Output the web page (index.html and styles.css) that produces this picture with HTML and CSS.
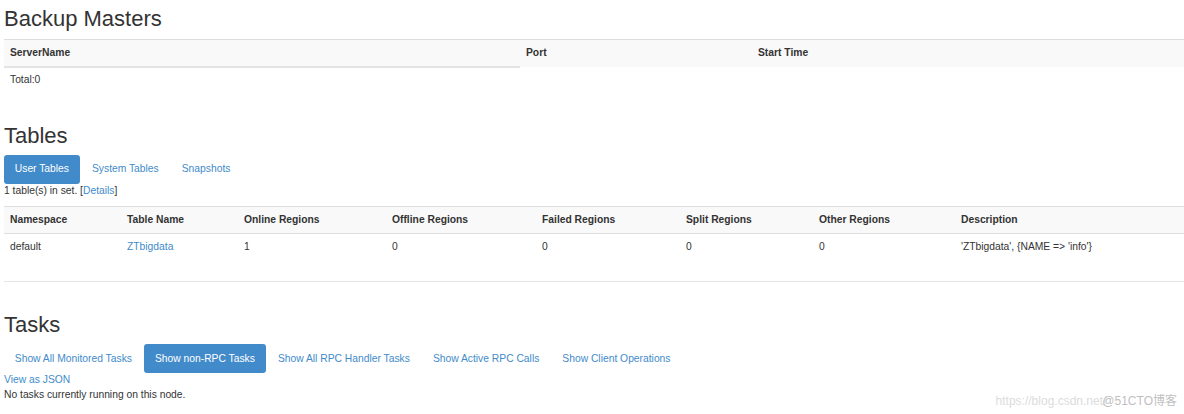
FILE: index.html
```html
<!DOCTYPE html>
<html>
<head>
<meta charset="utf-8">
<title>HBase Master</title>
<link rel="stylesheet" href="styles.css">
</head>
<body>
<section class="sec sec-backup">
  <h2 class="title">Backup Masters</h2>
  <table class="tbl">
    <colgroup>
      <col class="bw1"><col class="bw2"><col>
    </colgroup>
    <tr class="head"><th>ServerName</th><th>Port</th><th>Start Time</th></tr>
    <tr><td class="total">Total:0</td></tr>
  </table>
</section>

<section class="sec sec-tables">
  <h2 class="title">Tables</h2>
  <ul class="pills">
    <li><a class="pill active">User Tables</a></li>
    <li><a class="pill">System Tables</a></li>
    <li><a class="pill">Snapshots</a></li>
  </ul>
  <p class="count">1 table(s) in set. [<a class="link">Details</a>]</p>
  <table class="tbl">
    <colgroup>
      <col class="tw1"><col class="tw2"><col class="tw3"><col class="tw4"><col class="tw5"><col class="tw6"><col class="tw7"><col>
    </colgroup>
    <tr class="head">
      <th>Namespace</th><th>Table Name</th><th>Online Regions</th><th>Offline Regions</th><th>Failed Regions</th><th>Split Regions</th><th>Other Regions</th><th>Description</th>
    </tr>
    <tr class="row">
      <td>default</td><td><a class="link">ZTbigdata</a></td><td>1</td><td>0</td><td>0</td><td>0</td><td>0</td><td>'ZTbigdata', {NAME =&gt; 'info'}</td>
    </tr>
  </table>
  <hr class="rule">
</section>

<section class="sec sec-tasks">
  <h2 class="title">Tasks</h2>
  <ul class="pills">
    <li><a class="pill">Show All Monitored Tasks</a></li>
    <li><a class="pill active">Show non-RPC Tasks</a></li>
    <li><a class="pill">Show All RPC Handler Tasks</a></li>
    <li><a class="pill">Show Active RPC Calls</a></li>
    <li><a class="pill">Show Client Operations</a></li>
  </ul>
  <a class="link json">View as JSON</a>
  <p class="none">No tasks currently running on this node.</p>
</section>

<div class="watermark"><span class="wm-url">https://blog.csdn.net/</span><span class="wm-brand">@51CTO博客</span></div>
</body>
</html>
```

FILE: styles.css
```css
html, body {
  margin: 0;
  padding: 0;
  background: #ffffff;
}
body {
  padding-left: 4px;
  font-family: "Liberation Sans", Arial, sans-serif;
  font-size: 10.3px;
  line-height: 14.9px;
  color: #333333;
  position: relative;
  min-height: 414px;
  box-sizing: border-box;
}
.title {
  font-family: "Liberation Sans", Arial, sans-serif;
  font-weight: 500;
  font-size: 22px;
  line-height: 24.2px;
  margin: 0 0 7.2px 0;
  color: #333333;
}
.sec-backup .title { margin-top: 7px; margin-bottom: 7.8px; }
.sec-tables { margin-top: 30px; }
.sec-tasks { margin-top: 30.6px; }

.tbl {
  width: 100%;
  border-collapse: collapse;
  border-spacing: 0;
  table-layout: fixed;
}
.bw1 { width: 516px; }
.bw2 { width: 232px; }
.tw1 { width: 117px; }
.tw2 { width: 117px; }
.tw3 { width: 148px; }
.tw4 { width: 150px; }
.tw5 { width: 144px; }
.tw6 { width: 133px; }
.tw7 { width: 142px; }

.tbl th, .tbl td {
  padding: 6px;
  text-align: left;
  vertical-align: top;
  line-height: 14.3px;
}
.tbl .head th {
  background: #f9f9f9;
  border-top: 1px solid #dddddd;
  font-weight: bold;
  color: #333333;
}
.tbl .row td {
  border-top: 1px solid #dddddd;
}
.tbl td.total {
  border-top: 2px solid #e4e4e4;
  padding-top: 5px;
}

.pills {
  list-style: none;
  margin: 0;
  padding: 0;
  display: flex;
  gap: 1.4px;
}
.pill {
  display: block;
  padding: 7.4px 10.8px 7px;
  line-height: 14.3px;
  border-radius: 3px;
  color: #428bca;
  text-decoration: none;
  cursor: pointer;
}
.pill.active {
  background: #428bca;
  color: #ffffff;
}
.link {
  color: #428bca;
  text-decoration: none;
}
.count {
  margin: 0 0 7.6px 0;
}
.rule {
  border: 0;
  border-top: 1px solid #e5e5e5;
  margin: 20.4px 0 0 0;
  height: 0;
}
.json {
  display: block;
}
.none {
  margin: 0;
}
.watermark {
  position: absolute;
  right: 7px;
  top: 393px;
  font-family: "Liberation Sans", "Noto Sans CJK SC", sans-serif;
  font-size: 12px;
  line-height: 16px;
  white-space: nowrap;
}
.wm-url { color: #dcdcdc; }
.wm-brand { color: #bfbfbf; margin-left: -4px; }
```
